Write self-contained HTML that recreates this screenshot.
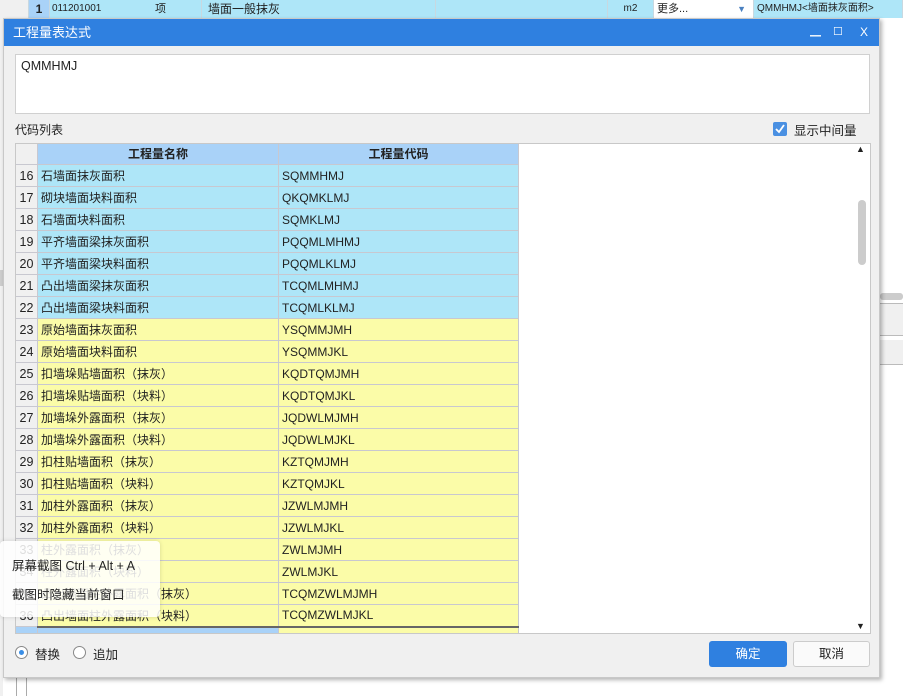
<!DOCTYPE html>
<html><head><meta charset="utf-8"><style>
*{box-sizing:border-box;margin:0;padding:0}
body{width:903px;height:696px;overflow:hidden;background:#fff;font-family:"Liberation Sans","Noto Sans CJK SC",sans-serif;font-size:12px;color:#222;position:relative}
.abs{position:absolute}
#top{left:0;top:0;width:903px;height:18px;background:#aee6f8}
#top div{position:absolute;top:0;height:18px;line-height:18px;font-size:11px;border-right:1px solid #c8d8e0}
#dlg{left:3px;top:18px;width:877px;height:660px;background:#f0f0f0;border:1px solid #c8c8c8;box-shadow:2px 2px 4px rgba(0,0,0,.3)}
#title{left:0;top:0;width:875px;height:27px;background:#2f80e0;color:#fff;font-size:13px;line-height:27px;padding-left:9px}
table{border-collapse:collapse;position:absolute;left:-1px;top:-2px}
td{height:22px;border:1px solid #c8c8d0;padding:0 3px;font-size:12px;white-space:nowrap;overflow:hidden}
td.n{width:22px;background:#f0f0f0;text-align:center;padding:0;font-size:12.5px}
td.a{width:241px}td.b{width:240px}
tr.c td.a,tr.c td.b{background:#aee6f8}
tr.y td.a,tr.y td.b{background:#fbfca8}
th{height:22px;background:#a9d2f8;border:1px solid #c8c8d0;font-weight:bold;font-size:12px}
</style></head><body>
<div class="abs" style="left:0;top:18px;width:3px;height:678px;background:#f0f0f0"></div>
<div class="abs" style="left:16px;top:678px;width:1px;height:18px;background:#aaa"></div>
<div class="abs" style="left:26px;top:678px;width:1px;height:18px;background:#aaa"></div>
<div class="abs" style="left:0;top:270px;width:3px;height:16px;background:#ccc"></div>
<div class="abs" style="left:880px;top:18px;width:23px;height:678px;background:#fff"></div>
<div class="abs" style="left:880px;top:293px;width:23px;height:7px;background:#ccc;border-radius:3px"></div>
<div class="abs" style="left:880px;top:303px;width:23px;height:33px;background:#f0f0f0;border-top:1px solid #bbb;border-bottom:1px solid #bbb"></div>
<div class="abs" style="left:880px;top:340px;width:23px;height:25px;background:#f0f0f0;border-bottom:1px solid #bbb"></div>
<div id="top" class="abs">
<div style="left:0;width:29px;background:#f0f0f0"></div>
<div style="left:29px;width:21px;background:#a9d2f8;text-align:center;font-weight:bold;font-size:12px">1</div>
<div style="left:50px;width:43px;padding-left:2px;font-size:10px;border:none">011201001</div>
<div style="left:93px;width:27px;border:none"></div>
<div style="left:120px;width:82px;text-align:center">项</div>
<div style="left:202px;width:234px;padding-left:6px;font-size:12px">墙面一般抹灰</div>
<div style="left:436px;width:172px"></div>
<div style="left:608px;width:46px;text-align:center;font-size:10px">m2</div>
<div style="left:654px;width:100px;background:#fff;padding-left:3px">更多...<span style="position:absolute;right:7px;color:#4a80c0;font-size:9px">▼</span></div>
<div style="left:754px;width:149px;padding-left:3px;font-size:10px">QMMHMJ&lt;墙面抹灰面积&gt;</div>
</div>
<div id="dlg" class="abs">
<div id="title" class="abs">工程量表达式
<span class="abs" style="left:806px;top:0;font-size:11px">▁</span>
<span class="abs" style="left:829px;top:0;font-size:11px">☐</span>
<span class="abs" style="left:856px;top:0;font-size:12px">X</span></div>
<div class="abs" style="left:11px;top:35px;width:855px;height:60px;background:#fff;border:1px solid #d0d0d0;padding:4px 5px;font-size:12.5px">QMMHMJ</div>
<div class="abs" style="left:11px;top:102px;font-size:12px">代码列表</div>
<div class="abs" style="left:769px;top:103px;width:14px;height:14px;background:#4a90e2;border-radius:2px"><svg width="14" height="14"><path d="M3 7 L6 10 L11 3" stroke="#fff" stroke-width="1.8" fill="none"/></svg></div>
<div class="abs" style="left:790px;top:101px;font-size:12.5px">显示中间量</div>
<div class="abs" style="left:11px;top:124px;width:856px;height:491px;background:#fff;border:1px solid #c8c8c8;overflow:hidden">
<table>
<tr><th style="width:22px;background:#f0f0f0"></th><th style="width:241px">工程量名称</th><th style="width:240px">工程量代码</th></tr>
<tr class="c"><td class="n">16</td><td class="a">石墙面抹灰面积</td><td class="b">SQMMHMJ</td></tr>
<tr class="c"><td class="n">17</td><td class="a">砌块墙面块料面积</td><td class="b">QKQMKLMJ</td></tr>
<tr class="c"><td class="n">18</td><td class="a">石墙面块料面积</td><td class="b">SQMKLMJ</td></tr>
<tr class="c"><td class="n">19</td><td class="a">平齐墙面梁抹灰面积</td><td class="b">PQQMLMHMJ</td></tr>
<tr class="c"><td class="n">20</td><td class="a">平齐墙面梁块料面积</td><td class="b">PQQMLKLMJ</td></tr>
<tr class="c"><td class="n">21</td><td class="a">凸出墙面梁抹灰面积</td><td class="b">TCQMLMHMJ</td></tr>
<tr class="c"><td class="n">22</td><td class="a">凸出墙面梁块料面积</td><td class="b">TCQMLKLMJ</td></tr>
<tr class="y"><td class="n">23</td><td class="a">原始墙面抹灰面积</td><td class="b">YSQMMJMH</td></tr>
<tr class="y"><td class="n">24</td><td class="a">原始墙面块料面积</td><td class="b">YSQMMJKL</td></tr>
<tr class="y"><td class="n">25</td><td class="a">扣墙垛贴墙面积（抹灰）</td><td class="b">KQDTQMJMH</td></tr>
<tr class="y"><td class="n">26</td><td class="a">扣墙垛贴墙面积（块料）</td><td class="b">KQDTQMJKL</td></tr>
<tr class="y"><td class="n">27</td><td class="a">加墙垛外露面积（抹灰）</td><td class="b">JQDWLMJMH</td></tr>
<tr class="y"><td class="n">28</td><td class="a">加墙垛外露面积（块料）</td><td class="b">JQDWLMJKL</td></tr>
<tr class="y"><td class="n">29</td><td class="a">扣柱贴墙面积（抹灰）</td><td class="b">KZTQMJMH</td></tr>
<tr class="y"><td class="n">30</td><td class="a">扣柱贴墙面积（块料）</td><td class="b">KZTQMJKL</td></tr>
<tr class="y"><td class="n">31</td><td class="a">加柱外露面积（抹灰）</td><td class="b">JZWLMJMH</td></tr>
<tr class="y"><td class="n">32</td><td class="a">加柱外露面积（块料）</td><td class="b">JZWLMJKL</td></tr>
<tr class="y"><td class="n">33</td><td class="a">柱外露面积（抹灰）</td><td class="b">ZWLMJMH</td></tr>
<tr class="y"><td class="n">34</td><td class="a">柱外露面积（块料）</td><td class="b">ZWLMJKL</td></tr>
<tr class="y"><td class="n">35</td><td class="a">凸出墙面柱外露面积（抹灰）</td><td class="b">TCQMZWLMJMH</td></tr>
<tr class="y"><td class="n">36</td><td class="a">凸出墙面柱外露面积（块料）</td><td class="b">TCQMZWLMJKL</td></tr>
<tr><td class="n" style="background:#a9d2f8"></td><td class="a" style="background:#a9d2f8;border-top:2px solid #666"></td><td class="b" style="background:#fbfca8;border-top:2px solid #666"></td></tr>
</table>
<div class="abs" style="left:840px;top:0;font-size:9px">▲</div>
<div class="abs" style="left:840px;top:477px;font-size:9px">▼</div>
<div class="abs" style="left:842px;top:56px;width:8px;height:65px;background:#ccc;border-radius:4px"></div>
</div>
<div class="abs" style="left:11px;top:627px;width:13px;height:13px;border:1px solid #888;border-radius:50%;background:#fff"><div style="margin:3px;width:5px;height:5px;border-radius:50%;background:#3a8ee6"></div></div>
<div class="abs" style="left:31px;top:625px;font-size:12.5px">替换</div>
<div class="abs" style="left:69px;top:627px;width:13px;height:13px;border:1px solid #888;border-radius:50%;background:#fff"></div>
<div class="abs" style="left:89px;top:625px;font-size:12.5px">追加</div>
<div class="abs" style="left:705px;top:622px;width:78px;height:26px;background:#2f80e0;border-radius:3px;color:#fff;text-align:center;line-height:26px;font-size:12.5px">确定</div>
<div class="abs" style="left:789px;top:622px;width:77px;height:26px;background:#fafafa;border:1px solid #ccc;border-radius:3px;text-align:center;line-height:24px;font-size:12.5px">取消</div>
</div>
<div class="abs" style="left:0;top:541px;width:160px;height:76px;background:rgba(255,255,255,.85);border-radius:4px;box-shadow:0 0 4px rgba(0,0,0,.15)">
<div class="abs" style="left:12px;top:14px;font-size:12.5px">屏幕截图 Ctrl + Alt + A</div>
<div class="abs" style="left:12px;top:43px;font-size:12.5px">截图时隐藏当前窗口</div>
</div>
</body></html>
